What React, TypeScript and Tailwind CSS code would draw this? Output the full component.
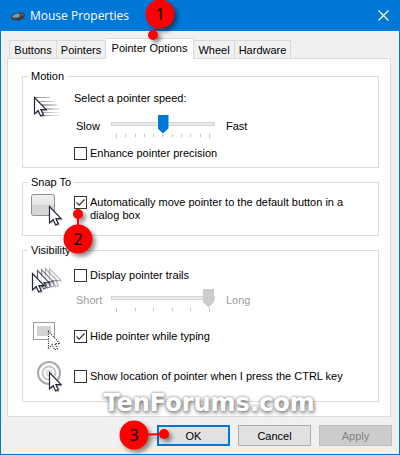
import type { ReactNode } from "react";
import clsx from "clsx";

const tabs = [
    { name: "Buttons", width: "w-[48px]" },
    { name: "Pointers", width: "w-[49px]" },
    { name: "Pointer Options", width: "w-[88px]" },
    { name: "Wheel", width: "w-[41px]" },
    { name: "Hardware", width: "w-[56px]" },
];

const MouseIcon = () => (
    <svg className="w-4 h-4" viewBox="0 0 16 16">
        <path d="M1 9.5C1 6.500 6 4.500 10 4.500c3 0 5 1 5 3 0 3-4.500 5-8 5-3.500 0-6-1-6-3z" fill="#3b3f45" />
        <path d="M2 9C2.500 7 6 5.500 9 5.200L11 8C8 10 4 10.500 2 9z" fill="#8b949c" />
        <path d="M10 5.200c2 0 4 .8 4 2.200l-3 .4z" fill="#5b6168" />
        <path d="M9 5.200L11.500 8 8 10.500" fill="none" stroke="#22262a" strokeWidth=".8" />
    </svg>
);

const CloseIcon = () => (
    <svg className="w-[11px] h-[11px]" viewBox="0 0 11 11" stroke="#fff" strokeWidth="1.2">
        <path d="M.5.5l10 10M10.500.5l-10 10" />
    </svg>
);

type CursorProps = { x: number; y: number; opacity?: number; dotted?: boolean; shadow?: boolean };

const Cursor = ({ x, y, opacity = 1, dotted, shadow }: CursorProps) => (
    <g transform={`translate(${x} ${y})`} opacity={opacity}>
        {shadow && (
            <path d="M2 2.500v15.500l3.700-3 2.500 5.500 2.800-1.300-2.300-5h4.800z" fill="#000" opacity=".25" />
        )}
        <path
            d="M.5.500v16.500l3.700-3.400 2.400 5.300 2.700-1.200-2.400-5.100h5.200z"
            fill="#fff"
            stroke="#23263a"
            strokeWidth="1.200"
            strokeDasharray={dotted ? "1 1.300" : undefined}
        />
    </g>
);

const SpeedIcon = () => (
    <svg className="w-8 h-8" viewBox="0 0 32 32">
        <defs>
            <linearGradient id="speed" gradientUnits="userSpaceOnUse" x1="3" x2="30" y1="0" y2="0">
                <stop offset="0" stopColor="#8e8e94" />
                <stop offset=".4" stopColor="#a8a8ae" />
                <stop offset="1" stopColor="#a8a8ae" stopOpacity=".1" />
            </linearGradient>
        </defs>
        <g fill="url(#speed)">
            <rect x="4" y="6" width="15" height="1" />
            <rect x="6" y="10" width="17" height="1" />
            <rect x="9" y="13" width="17" height="2" />
            <rect x="12" y="17" width="17" height="2" />
            <rect x="12" y="21" width="17" height="1" />
            <rect x="10" y="24" width="18" height="1" />
        </g>
        <Cursor x={3} y={6} shadow />
    </svg>
);

const SnapIcon = () => (
    <svg className="w-8 h-8" viewBox="0 0 32 32">
        <defs>
            <linearGradient id="key" x1="0" x2="0" y1="0" y2="1">
                <stop offset="0" stopColor="#f2f2f2" />
                <stop offset=".5" stopColor="#e4e4e4" />
                <stop offset=".5" stopColor="#d4d4d4" />
                <stop offset="1" stopColor="#d9d9d9" />
            </linearGradient>
        </defs>
        <rect x=".5" y=".5" width="23" height="21" rx="2" fill="url(#key)" stroke="#8e8f8f" />
        <Cursor x={18} y={12} shadow />
    </svg>
);

const TrailsIcon = () => (
    <svg className="w-8 h-8" viewBox="0 0 32 32">
        <Cursor x={18} y={1} opacity={0.3} />
        <Cursor x={14} y={1} opacity={0.4} />
        <Cursor x={10} y={2} opacity={0.55} />
        <Cursor x={6} y={3} opacity={0.75} />
        <Cursor x={1} y={6} shadow />
    </svg>
);

const HideIcon = () => (
    <svg className="w-8 h-8" viewBox="0 0 32 32">
        <rect x="2.500" y="1.500" width="21" height="17" fill="#fff" stroke="#9b9b9b" />
        <rect x="6" y="5" width="14" height="10" fill="#d2d2d4" />
        <Cursor x={17} y={10} dotted />
    </svg>
);

const LocateIcon = () => (
    <svg className="w-8 h-8" viewBox="0 0 32 32">
        <g fill="none">
            <circle cx="18" cy="12" r="11" stroke="#a9a9ab" strokeWidth="2" />
            <circle cx="18" cy="12" r="6.500" stroke="#c6c6c8" strokeWidth="2" />
            <circle cx="18" cy="12" r="2.500" stroke="#dadadc" strokeWidth="2" />
        </g>
        <Cursor x={18} y={11} shadow />
    </svg>
);

const Group = ({ title, className, children }: { title: string; className?: string; children: ReactNode }) => (
    <fieldset className={clsx("pl-[8px] border border-[#dcdcdc]", className)}>
        <legend className="-ml-[3px] px-[3px] leading-[13px]">{title}</legend>
        {children}
    </fieldset>
);

const Row = ({ icon, children }: { icon: ReactNode; children: ReactNode }) => (
    <div className="flex">
        <div className="w-[43px] shrink-0">{icon}</div>
        <div className="flex-1">{children}</div>
    </div>
);

const Checkbox = ({ label, checked }: { label: string; checked?: boolean }) => (
    <label className="flex items-start gap-[3px] leading-[13px]">
        <span className="relative flex shrink-0">
            <input
                type="checkbox"
                defaultChecked={checked}
                className="peer appearance-none w-[13px] h-[13px] border border-[#333] bg-white"
            />
            <svg
                className="absolute inset-0 w-[13px] h-[13px] hidden peer-checked:block pointer-events-none"
                viewBox="0 0 13 13"
            >
                <path d="M2.500 6.500L5.200 9.200 10.500 3.500" fill="none" stroke="#333" strokeWidth="1.200" />
            </svg>
        </span>
        <span>{label}</span>
    </label>
);

type SliderProps = { name: string; low: string; high: string; max: number; value: number; disabled?: boolean };

const Slider = ({ name, low, high, max, value, disabled }: SliderProps) => (
    <div className={clsx("flex items-center", disabled && "text-[#9d9d9d]")}>
        <span className="w-[37px] shrink-0 pl-[2px]">{low}</span>
        <div className="w-[104px]">
            <input
                type="range"
                aria-label={name}
                min={0}
                max={max}
                defaultValue={value}
                disabled={disabled}
                className="block w-full h-[19px] appearance-none bg-transparent [&::-webkit-slider-runnable-track]:h-[4px] [&::-webkit-slider-runnable-track]:border [&::-webkit-slider-runnable-track]:border-[#d6d6d6] [&::-webkit-slider-runnable-track]:bg-[#e7eaea] [&::-webkit-slider-thumb]:appearance-none [&::-webkit-slider-thumb]:w-[11px] [&::-webkit-slider-thumb]:h-[19px] [&::-webkit-slider-thumb]:-mt-[8px] [&::-webkit-slider-thumb]:bg-[#0078d7] disabled:[&::-webkit-slider-thumb]:bg-[#cccccc] [&::-webkit-slider-thumb]:[clip-path:polygon(0_0,100%_0,100%_72%,50%_100%,0_72%)]"
            />
            <div className="flex justify-between px-[5px] pt-px h-[5px]">
                {Array.from({ length: max + 1 }, (_, i) => (
                    <span
                        key={i}
                        className={clsx("w-px bg-[#c4c4c4]", i === 0 || i === max ? "h-[4px]" : "h-[3px]")}
                    />
                ))}
            </div>
        </div>
        <span className="pl-[11px]">{high}</span>
    </div>
);

type CalloutProps = { step: number; place: string; dot: { x: number; y: number } };

// numbered pin, the dot is given relative to the centre of the circle
const Callout = ({ step, place, dot }: CalloutProps) => (
    <div className={clsx("absolute w-[30px] h-[30px] pointer-events-none", place)}>
        <svg
            className="absolute inset-0 w-full h-full overflow-visible drop-shadow-[3px_3px_2px_rgba(0,0,0,0.45)]"
            viewBox="-15 -15 30 30"
        >
            <path d={`M0 0L${dot.x} ${dot.y}`} stroke="#f00" strokeWidth="2" />
            <circle r="14.500" fill="#f00" />
            <circle cx={dot.x} cy={dot.y} r="5" fill="#f00" />
        </svg>
        <span className="relative flex w-full h-full items-center justify-center font-['Noto_Sans'] text-[16px] text-black">
            {step}
        </span>
    </div>
);

const App = () => {
    return (
        <main className="relative min-h-screen flex flex-col bg-[#f0f0f0] border-x border-b border-[#0078d7] font-['Liberation_Sans',sans-serif] text-[11px] leading-[14px] text-black">
            <header className="flex items-center h-[31px] pl-[9px] pr-[10px] bg-[#0078d7] text-white">
                <MouseIcon />
                <h1 className="ml-[4px] flex-1 font-['Open_Sans',sans-serif] text-[12px]">Mouse Properties</h1>
                <button type="button" aria-label="Close">
                    <CloseIcon />
                </button>
            </header>

            <div role="tablist" className="flex items-end mt-[7px] ml-[8px]">
                {tabs.map((tab, i) => (
                    <button
                        key={tab.name}
                        type="button"
                        role="tab"
                        aria-selected={i === 2}
                        className={clsx(
                            "border-t border-r border-[#d9d9d9]",
                            tab.width,
                            i === 0 && "border-l",
                            i === 2 ? "relative -mb-px h-[21px] pb-[2px] bg-white" : "h-[18px]"
                        )}
                    >
                        {tab.name}
                    </button>
                ))}
            </div>

            <section className="flex flex-col gap-2 ml-[6px] mr-[8px] pt-[11px] pb-[14px] pl-[14px] pr-[11px] bg-white border border-[#dcdcdc]">
                <Group title="Motion" className="pb-[7px]">
                    <Row icon={<div className="pt-[8px]"><SpeedIcon /></div>}>
                        <p className="pt-[8px] pb-[9px]">Select a pointer speed:</p>
                        <Slider name="Pointer speed" low="Slow" high="Fast" max={10} value={5} />
                        <div className="pt-[9px]">
                            <Checkbox label="Enhance pointer precision" />
                        </div>
                    </Row>
                </Group>

                <Group title="Snap To" className="pb-[9px]">
                    <Row icon={<div className="pt-[5px]"><SnapIcon /></div>}>
                        <div className="pt-[7px] max-w-[280px]">
                            <Checkbox checked label="Automatically move pointer to the default button in a dialog box" />
                        </div>
                    </Row>
                </Group>

                <Group title="Visibility" className="pt-[10px] pb-[8px]">
                    <Row icon={<TrailsIcon />}>
                        <div className="pt-[2px] pb-[6px]">
                            <Checkbox label="Display pointer trails" />
                        </div>
                        <Slider name="Trail length" low="Short" high="Long" max={5} value={5} disabled />
                    </Row>
                    <div className="pt-[9px]">
                        <Row icon={<HideIcon />}>
                            <div className="pt-[9px]">
                                <Checkbox checked label="Hide pointer while typing" />
                            </div>
                        </Row>
                    </div>
                    <div className="pt-[8px]">
                        <Row icon={<LocateIcon />}>
                            <div className="pt-[9px]">
                                <Checkbox label="Show location of pointer when I press the CTRL key" />
                            </div>
                        </Row>
                    </div>
                </Group>
            </section>

            <footer className="flex justify-end gap-[8px] pt-[8px] pb-[8px] pr-[7px]">
                <button type="button" className="w-[73px] h-[21px] border-2 border-[#0078d7] bg-[#e1e1e1]">
                    OK
                </button>
                <button type="button" className="w-[73px] h-[21px] border border-[#adadad] bg-[#e1e1e1]">
                    Cancel
                </button>
                <button type="button" disabled className="w-[73px] h-[21px] border border-[#bfbfbf] bg-[#cccccc] text-[#838383]">
                    Apply
                </button>
            </footer>

            <p className="absolute inset-x-0 top-[389px] pl-[18px] text-center font-['DejaVu_Sans',sans-serif] font-bold text-[24px] leading-[28px] text-white pointer-events-none [text-shadow:1px_2px_4px_#777,0_0_3px_#888]">
                TenForums.com
            </p>
            <Callout step={1} place="left-[144px] -top-[1px]" dot={{ x: -7, y: 21 }} />
            <Callout step={2} place="left-[62px] top-[224px]" dot={{ x: 0, y: -25 }} />
            <Callout step={3} place="left-[118px] top-[420px]" dot={{ x: 30, y: -1 }} />
        </main>
    );
};

export default App;
